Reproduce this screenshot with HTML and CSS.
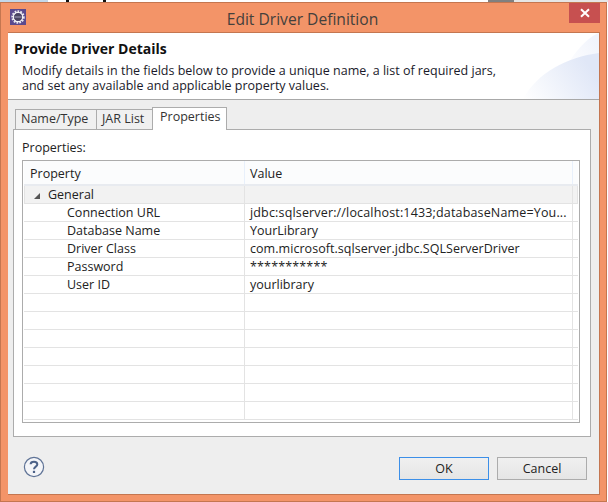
FILE: index.html
```html
<!DOCTYPE html>
<html lang="en">
<head>
<meta charset="utf-8">
<title>Edit Driver Definition</title>
<link rel="stylesheet" href="styles.css">
</head>
<body>
<div class="backdrop"><span class="bd-a"></span><span class="bd-b"><i class="spot"></i><i class="spot"></i></span><span class="bd-c"></span><span class="bd-d"></span></div>
<div class="window">
  <div class="titlebar">
    <svg class="app-icon" width="16" height="16" viewBox="0 0 16 16">
      <rect width="16" height="16" fill="#5b4a8e"/>
      <circle cx="8" cy="8" r="5.6" fill="none" stroke="#e8e8ee" stroke-width="2.2" stroke-dasharray="1.7 1.1"/>
      <circle cx="8" cy="8" r="4.6" fill="none" stroke="#f4f4f6" stroke-width="1.2"/>
      <circle cx="8" cy="8" r="3.8" fill="#4a4560"/>
      <rect x="4.4" y="7" width="7.2" height="2" fill="#77738e"/>
    </svg>
    <div class="title">Edit Driver Definition</div>
    <div class="close"><svg width="10" height="10" viewBox="0 0 10 10"><path d="M1 1.2 9 8.8M9 1.2 1 8.8" stroke="#fff" stroke-width="2"/></svg></div>
  </div>
  <div class="client">
    <header class="banner">
      <svg class="swoosh" width="76" height="66" viewBox="0 0 76 66" preserveAspectRatio="none">
        <defs>
          <linearGradient id="g1" x1="0" y1="1" x2="1" y2="0.6"><stop offset="0" stop-color="#fff"/><stop offset="1" stop-color="#e0e7f7"/></linearGradient>
          <linearGradient id="g2" x1="0" y1="1" x2="1" y2="0.2"><stop offset="0.4" stop-color="#fff"/><stop offset="1" stop-color="#f1f4fc"/></linearGradient>
        </defs>
        <path d="M26 66C42 30 60 6 76 0V66Z" fill="url(#g2)"/>
        <path d="M0 66C14 40 44 24 76 20V66Z" fill="url(#g1)"/>
      </svg>
      <h1>Provide Driver Details</h1>
      <p>Modify details in the fields below to provide a unique name, a list of required jars,<br>and set any available and applicable property values.</p>
    </header>
    <main class="content">
      <div class="tabs">
        <div class="tab">Name/Type</div>
        <div class="tab">JAR List</div>
        <div class="tab active">Properties</div>
      </div>
      <section class="panel">
        <div class="label">Properties:</div>
        <div class="table">
          <div class="row head"><div class="c1">Property</div><div class="c2">Value</div><div class="c3"></div></div>
          <div class="row group"><div class="c1"><span class="twist"></span>General</div><div class="c2"></div><div class="c3"></div></div>
          <div class="row"><div class="c1 indent">Connection URL</div><div class="c2 wide">jdbc:sqlserver://localhost:1433;databaseName=You...</div><div class="c3"></div></div>
          <div class="row"><div class="c1 indent">Database Name</div><div class="c2">YourLibrary</div><div class="c3"></div></div>
          <div class="row"><div class="c1 indent">Driver Class</div><div class="c2 tight">com.microsoft.sqlserver.jdbc.SQLServerDriver</div><div class="c3"></div></div>
          <div class="row"><div class="c1 indent">Password</div><div class="c2 wide">***********</div><div class="c3"></div></div>
          <div class="row"><div class="c1 indent">User ID</div><div class="c2">yourlibrary</div><div class="c3"></div></div>
          <div class="row"><div class="c1"></div><div class="c2"></div><div class="c3"></div></div>
          <div class="row"><div class="c1"></div><div class="c2"></div><div class="c3"></div></div>
          <div class="row"><div class="c1"></div><div class="c2"></div><div class="c3"></div></div>
          <div class="row"><div class="c1"></div><div class="c2"></div><div class="c3"></div></div>
          <div class="row"><div class="c1"></div><div class="c2"></div><div class="c3"></div></div>
          <div class="row"><div class="c1"></div><div class="c2"></div><div class="c3"></div></div>
          <div class="row last"><div class="c1"></div><div class="c2"></div><div class="c3"></div></div>
        </div>
      </section>
      <footer class="footer">
        <svg class="help" width="22" height="22" viewBox="0 0 22 22">
          <circle cx="11" cy="11" r="9.6" fill="#f4f5f8" stroke="#5f7396" stroke-width="1.2"/>
          <path d="M7.6 8.2C7.8 4.9 14.3 4.9 14.3 8.4 14.3 10.6 11 10.6 11 13.2" fill="none" stroke="#4d6288" stroke-width="2"/>
          <rect x="9.9" y="14.8" width="2.2" height="2.2" fill="#4d6288"/>
        </svg>
        <div class="btn default">OK</div>
        <div class="btn">Cancel</div>
      </footer>
    </main>
  </div>
</div>
</body>
</html>
```
FILE: styles.css
```css
* { box-sizing: border-box; }
html, body { margin: 0; padding: 0; }
body {
  width: 608px; height: 502px; overflow: hidden; background: #fff;
  font-family: "Open Sans", "Noto Sans", sans-serif; font-size: 12.5px; color: #222;
}
.backdrop { height: 2px; display: flex; background: #fff; }
.bd-a { width: 48px; background: #c4d8ea; }
.bd-b { width: 440px; display: flex; gap: 34px; padding-left: 18px; }
.spot { width: 3px; height: 2px; background: #111; }
.bd-c { width: 26px; background: #808080; }
.bd-d { width: 94px; background: #e6e6e6; }
.window {
  width: 607px; height: 500px; background: #f39468;
  border: 1px solid #c47650;
  display: flex; flex-direction: column;
}
.titlebar { height: 29px; display: flex; align-items: flex-start; position: relative; flex: none; }
.app-icon { margin: 6px 0 0 9px; flex: none; }
.title {
  flex: 1; text-align: center; font-size: 15.6px; line-height: 20px; padding: 6px 27px 0 0; color: #44403c;
}
.close {
  position: absolute; right: 6px; top: 0; width: 31px; height: 20px; background: #c75050;
  display: flex; align-items: center; justify-content: center;
}
.client {
  margin: 0 6px 6px 7px; flex: 1; display: flex; flex-direction: column;
  background: #f0f0f0; border: 1px solid #c47650; border-width: 1px 1px 1px 0; min-height: 0;
}
.banner {
  height: 67px; flex: none; background: #fff; border-bottom: 1px solid #a8a8a8;
  padding: 6px 0 0 6px; position: relative;
}
.swoosh { position: absolute; right: 0; bottom: 0; }
.banner h1 { margin: 0; font-size: 14px; line-height: 20px; font-weight: 700; color: #111; position: relative; }
.banner p { margin: 4px 0 0 8px; line-height: 15px; color: #1a1a2a; position: relative; }
.content { flex: 1; display: flex; flex-direction: column; padding: 6px 8px 0 5px; min-height: 0; background: #eee; }
.tabs { display: flex; align-items: flex-end; height: 23px; padding-left: 2px; flex: none; }
.tab {
  height: 20px; padding: 0 5px; line-height: 17px; background: #f0f0f0; border: 1px solid #acacac; border-bottom: 0; margin-right: -1px; color: #333;
}
.tab:nth-child(1) { width: 82px; }
.tab:nth-child(2) { width: 57px; }
.tab.active {
  height: 23px; width: 75px; background: #fff; line-height: 18px; padding: 0 7px; margin-bottom: -1px; position: relative; z-index: 1; margin-right: 0;
}
.panel {
  height: 308px; flex: none; background: #fff; border: 1px solid #acacac; padding: 10px 8px 0 8px;
}
.label { height: 20px; line-height: 16px; }
.table { width: 558px; height: 263px; border: 1px solid #acacac; overflow: hidden; padding: 0 1px; background: #fff; }
.row { display: flex; height: 18px; border-bottom: 1px solid #e3e3e3; }
.c1 { width: 221px; line-height: 17px; flex: none; border-right: 1px solid #e3e3e3; white-space: nowrap; }
.c2 { width: 328px; line-height: 17px; flex: none; padding-left: 5px; white-space: nowrap; border-right: 1px solid #e3e3e3; }
.wide { letter-spacing: 0.16px; }
.tight { letter-spacing: 0.05px; }
.c3 { flex: 1; }
.indent { padding-left: 43px; }
.head { height: 25px; background: #fbfcfd; border-bottom: 2px solid #e8ebf0; }
.head .c1, .head .c2 { line-height: 25px; border-right-color: #e8f0fb; }
.head .c1 { padding-left: 6px; }
.group { background: #f2f2f2; border: 1px solid #e3e3e3; border-top: 0; height: 18px; }
.group .c1 { padding-left: 9px; width: 220px; }
.twist {
  display: inline-block; width: 0; height: 0; margin-right: 8px; vertical-align: 0;
  border-style: solid; border-width: 0 0 6px 6px; border-color: transparent transparent #555 transparent;
}
.footer { flex: 1; position: relative; display: flex; justify-content: flex-end; padding: 20px 4px 0 0; gap: 8px; }
.help { position: absolute; left: 10px; top: 19px; }
.btn {
  width: 90px; height: 23px; line-height: 21px; text-align: center; border: 1px solid #acacac;
  background: linear-gradient(#f0f0f0, #e5e5e5); color: #222;
}
.btn.default { border-color: #3c8fe8; }
```
